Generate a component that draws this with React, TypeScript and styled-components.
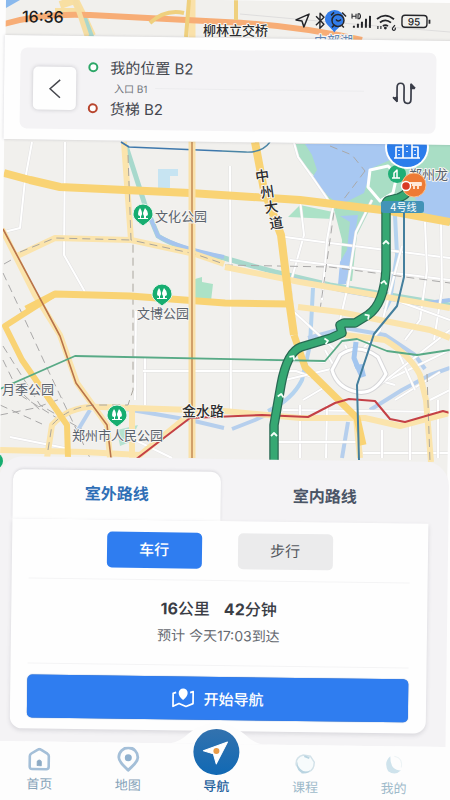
import React, { useState } from "react";
import styled, { createGlobalStyle } from "styled-components";

const fontStack = `Inter, "Noto Sans CJK SC", "Noto Sans", sans-serif`;

const GlobalStyle = createGlobalStyle`
  * { box-sizing: border-box; }
  html, body { margin: 0; background: #fdfdfd; }
  body { font-family: ${fontStack}; color: #333a45; overflow-x: hidden; }
  button { font-family: inherit; cursor: pointer; }
`;

const Screen = styled.main`
  position: relative;
  min-height: 100vh;
  display: flex;
  overflow: hidden;
`;

const MapLayer = styled.div`
  position: absolute;
  inset: 0;
  svg { display: block; width: 100%; height: 490px; }
`;

const Tilted = styled.div`
  position: relative;
  flex: 1;
  display: flex;
  flex-direction: column;
  transform: rotate(0.75deg);
`;

const StatusBar = styled.div`
  height: 38px;
  padding: 0 23px 0 17px;
  display: flex;
  align-items: center;
  justify-content: space-between;
  color: #1c1c1e;
`;

const Clock = styled.time`
  font-size: 16px;
  line-height: 20px;
  font-weight: 500;
`;

const StatusIcons = styled.div`
  display: flex;
  svg { display: block; }
`;

const Header = styled.header`
  background: #fefefe;
  padding: 12px 18px 11px 16px;
  box-shadow: 0 0 3px rgba(60, 60, 80, 0.22);
`;

const RouteCard = styled.section`
  height: 81px;
  display: flex;
  align-items: center;
  gap: 12px;
  padding: 0 20px 0 13px;
  border-radius: 7px;
  background: #f4f3f5;
`;

const BackButton = styled.button`
  width: 43px;
  height: 43px;
  padding: 0;
  display: grid;
  place-items: center;
  border: 0;
  border-radius: 5px;
  background: #fefefe;
  box-shadow: 0 0 4px rgba(40, 40, 60, 0.22);
`;

const Stops = styled.div`
  flex: 1;
  display: flex;
  flex-direction: column;
  padding-bottom: 3px;
`;

const Stop = styled.div`
  display: flex;
  align-items: center;
  gap: 12px;
  height: 22px;
  font-size: 15px;
  color: #44474f;
`;

const Ring = styled.span<{ $color: string }>`
  width: 10px;
  height: 10px;
  border: 2px solid ${(p) => p.$color};
  border-radius: 50%;
  background: #fff;
`;

const Via = styled.div`
  display: flex;
  align-items: center;
  gap: 8px;
  height: 19px;
  padding-left: 26px;
  padding-right: 16px;
  font-size: 10px;
  color: #70737b;
  &::after {
    content: "";
    flex: 1;
    height: 1px;
    background: #ececee;
  }
`;

const SwapButton = styled.button`
  padding: 0;
  border: 0;
  background: none;
  display: grid;
`;

const MapWindow = styled.div`
  flex: 1;
  min-height: 160px;
`;

const Sheet = styled.section`
  background: #f4f3f5;
  border-radius: 24px 24px 0 0;
  padding: 13px 20px 13px 14px;
`;

const Tabs = styled.div`
  display: flex;
`;

const Tab = styled.button<{ $active: boolean }>`
  flex: 1;
  height: 49px;
  padding: 0 0 6px;
  border: 0;
  border-radius: 10px 10px 0 0;
  background: ${(p) => (p.$active ? "#fefefe" : "transparent")};
  color: ${(p) => (p.$active ? "#2f6fb6" : "#4b5566")};
  box-shadow: ${(p) => (p.$active ? "0 -1px 3px rgba(60, 60, 80, 0.14)" : "none")};
  font-size: 16px;
  font-weight: 700;
`;

const RoutePanel = styled.div`
  position: relative;
  display: flex;
  flex-direction: column;
  padding: 12px 18px 11px 17px;
  border-radius: 0 0 12px 12px;
  background: #fefefe;
  box-shadow: 0 2px 4px rgba(60, 60, 80, 0.15);
`;

const Modes = styled.div`
  display: flex;
  justify-content: center;
  gap: 36px;
  padding-bottom: 11px;
`;

const Mode = styled.button<{ $active: boolean }>`
  width: 95px;
  height: 36px;
  padding: 0 0 3px;
  border: 0;
  border-radius: 5px;
  font-size: 15px;
  font-weight: ${(p) => (p.$active ? 500 : 400)};
  background: ${(p) => (p.$active ? "#2f7df0" : "#ebebec")};
  color: ${(p) => (p.$active ? "#fff" : "#55585e")};
`;

const Summary = styled.div`
  height: 86px;
  display: flex;
  flex-direction: column;
  align-items: center;
  padding-top: 15px;
  border-top: 1px solid #f4f4f5;
  border-bottom: 1px solid #f4f4f5;
`;

const Totals = styled.div`
  display: flex;
  gap: 14px;
  font-size: 16px;
  line-height: 26px;
  font-weight: 500;
  color: #3a3d45;
  b { font-weight: 700; }
`;

const Arrival = styled.div`
  font-size: 14px;
  line-height: 28px;
  color: #666a71;
`;

const StartButton = styled.button`
  height: 43px;
  margin-top: 11px;
  padding: 0;
  display: flex;
  align-items: center;
  justify-content: center;
  gap: 8px;
  border: 0;
  border-radius: 5px;
  background: #2f7df0;
  box-shadow: 0 0 1px #2459a8;
  color: #fff;
  font-size: 15px;
  font-weight: 500;
`;

const Nav = styled.nav`
  position: relative;
  height: 56px;
  display: flex;
  padding-right: 7px;
  background: #fdfdfd;
  box-shadow: 0 10px 0 #fdfdfd;
`;

const Bump = styled.svg`
  position: absolute;
  left: 50%;
  bottom: 100%;
  width: 92px;
  height: 22px;
  margin-left: -50px;
`;

const NavItem = styled.a<{ $tone: "idle" | "active" | "faded" }>`
  position: relative;
  flex: 1;
  display: flex;
  flex-direction: column;
  align-items: center;
  justify-content: flex-end;
  gap: ${(p) => (p.$tone === "active" ? 2 : 4)}px;
  padding-bottom: 6px;
  font-size: 13px;
  line-height: 16px;
  text-decoration: none;
  color: ${(p) =>
    p.$tone === "active" ? "#1e5f9c" : p.$tone === "idle" ? "#86a3b9" : "#9dbaca"};
  font-weight: ${(p) => (p.$tone === "active" ? 500 : 400)};
  svg { display: block; flex: none; }
`;

const Casing = ({ d, w, fill, edge }: { d: string; w: number; fill: string; edge: string }) => (
  <>
    <path d={d} stroke={edge} strokeWidth={w + 1} />
    <path d={d} stroke={fill} strokeWidth={w} />
  </>
);

const minorRoads = [
  "M32 142 L25 180 L20 228 L4 232", "M65 142 L64 255 L85 292", "M145 358 V405",
  "M136 311 L135 400", "M143 371 H296 L320 380", "M230 166 L231 410",
  "M294 143 L298 157 L313 178 L333 207", "M300 200 L304 235 L290 285 L295 330",
  "M285 237 L330 243 L450 258", "M333 207 L327 240 L322 300", "M290 260 L450 280",
  "M372 200 L356 232 L347 290 L340 320", "M425 222 L427 270 L420 320 L405 340",
  "M441 222 L442 290 L434 340", "M402 246 L380 330 L360 352", "M395 300 L450 320",
  "M294 312 L318 334 L335 350", "M283 410 L450 412", "M327 405 L326 458", "M300 405 V458",
  "M270 442 H360", "M363 453 H450", "M382 430 V458", "M410 420 V460", "M438 400 V458",
  "M377 385 L450 350", "M395 400 L440 372", "M395 345 L415 390", "M345 345 L360 375 L395 385",
  "M285 380 L335 368 L325 350", "M377 387 L450 330", "M430 400 L450 390", "M303 400 L325 387",
  "M284 240 L290 300", "M270 360 L325 362", "M10 437 L65 448", "M135 440 L172 458",
];

const TreePin = ({ x, y }: { x: number; y: number }) => (
  <g transform={`translate(${x} ${y})`}>
    <path d="M-10 0a10 10 0 1 1 20 0c0 5-5 8-10 12c-5-4-10-7-10-12Z" fill="#16ad70" stroke="#e8f4ec" strokeWidth="1" />
    <path d="M-3 -6 C-1 -3 -1 -1 -1 0 Q-1 1 -2 2 V4 H1 V2 Q0 1 0 -1 Q1 -4 2 -6 Q5 -3 5 0 Q5 2 3 2 V4 H5 V5 H-5 V4 H-3 V2 Q-5 2 -5 0 Q-5 -3 -3 -6Z" fill="#fff" />
  </g>
);

const Chevron = ({ x, y, a }: { x: number; y: number; a: number }) => (
  <path d="M-3 2 L0 -1 L3 2" transform={`translate(${x} ${y}) rotate(${a})`} stroke="#f4fff8" strokeWidth="1.8" />
);

const routePath = "M274 462 V425 L281 385 Q287 352 301 347 L331 338 L342 333 L340 325 L344 323 H355 L368 315 Q384 304 386 270 L386 207 Q385 201 390 200 L398 198 Q405 196 409 190";

const MapDrawing = () => (
  <svg viewBox="0 0 450 490" preserveAspectRatio="xMidYMin slice" fill="none" strokeLinejoin="round" fontFamily={fontStack} role="img" aria-label="地图">
    <path d="M0 0H450V490H0Z" fill="#f1f0ed" />
    <path d="M293 144 L300 160 L316 178 L332 204 L335 213 L342 240 L340 280 L352 281 L357 235 L372 205 L450 225 V144Z" fill="#a9dec5" />
    <path d="M305 144 L312 155 L317 170 L312 178 L328 196 L340 205 L364 193 L372 168 L390 160 L398 144Z M405 178 L415 168 L432 178 L450 172 V220 L424 213 L415 198Z M340 216 L350 222 L347 250 L340 262 L338 285 L346 284 L355 235 L358 215Z" fill="#a8c8f2" />
    <path d="M288 217 L300 205 L333 212 L333 219Z M195 279 L202 277 V282 L213 284 L211 301 L195 298Z" fill="#ace2c7" />
    <path d="M158 169 H178 V176 H170 V188 H158Z" fill="#c7e4f2" />
    <path d="M0 0H20L6 8Z" fill="#8ab9ed" />
    <path d="M117 430 L138 425 L130 442 L120 446Z" fill="#b5e2cf" />

    <path d="M126 146 L145 205 L158 236 Q178 249 224 258 L275 272 L330 285 L450 305" stroke="#a8d9cd" strokeWidth="5" />
    <path d="M145 205 L158 236 Q178 248 224 257 M285 277 L345 291 L420 304 L450 300" stroke="#a5c4ee" strokeWidth="4" />
    <path d="M395 215 L397 255 L390 300 L385 310 M313 288 L310 345 L302 380 Q292 400 268 411" stroke="#b4d3ef" strokeWidth="4" />
    <path d="M308 338 L345 328 L385 335 L415 355 L425 369 M370 410 L402 390 L430 375 L450 368 M232 429 L255 420 L268 414 M348 422 L342 458 M120 408 L190 420 L224 428 M78 430 L90 410" stroke="#b6cfed" strokeWidth="4" />

    {minorRoads.map((d) => <Casing key={d} d={d} w={2} fill="#fff" edge="#e2e1e2" />)}
    <path d="M370 170 L388 166 L397 175 L393 193 L380 201 L368 187Z" fill="#a9dec5" stroke="#fff" strokeWidth="3" />
    <path d="M340 355 Q358 342 378 357 L386 374 Q374 395 357 392 Q337 388 332 370Z" fill="#f1f0ed" stroke="#d6d6d8" strokeWidth="5" />
    <path d="M340 355 Q358 342 378 357 L386 374 Q374 395 357 392 Q337 388 332 370Z" stroke="#fff" strokeWidth="3" />
    <path d="M356 342 L354 358 L358 368" stroke="#a3c6ef" strokeWidth="5" />
    <path d="M354 365 L363 364 L366 376 L360 378Z" fill="#a3c6ef" />

    <g stroke="#aaa9a9" strokeWidth="1" strokeDasharray="8 5">
      <path d="M365 171 L334 212 L320 310 M330 146 L352 155 L365 171 M225 265 L330 267 L450 283 M4 264 L20 255" />
      <path d="M3 273 L25 320 L48 370 L90 458 M3 346 L40 405 L83 430 M3 360 L20 395 L60 420 M0 415 L35 408 L63 398 M0 405 L42 424 M24 395 L40 410" />
    </g>

    <g strokeWidth="6" stroke="#fbe4ac">
      <path d="M124 142 L131 240 L195 254 L224 264" />
      <path d="M15 257 L55 238 L131 240" />
      <path d="M2 229 L35 295 L60 335 L77 383 L107 425 L110 458" />
      <path d="M47 458 L52 425 Q70 405 100 407 L224 411 L300 418 L365 418 L400 426 L450 413" />
      <path d="M132 405 V458 M0 450 L85 452 L140 455 L190 414" />
      <path d="M225 267 L300 282 L450 308 M298 307 L340 312 L430 330 L450 338" />
      <path d="M345 335 L385 340 Q410 355 420 375 L426 400 L431 462 M356 418 L360 458" />
    </g>
    <path d="M128 155 L131 240 L195 254 L224 264 M20 252 L55 238 L131 240 M48 450 L52 425 Q70 405 100 405 H128 L133 390 V242 M427 374 L430 462" stroke="#aaa69e" strokeWidth="1" strokeDasharray="8 5" />
    <g stroke="#f9d374">
      <path d="M4 173 L30 180 L60 187 L190 193 L300 200 L390 211 L450 222" strokeWidth="8" />
      <path d="M26 309 L55 294 L130 296 L225 303 L290 304" strokeWidth="7" />
      <path d="M255 142 L264 190 L281 235 L289 300 L294 335" strokeWidth="8" />
      <path d="M294 335 L305 367 L357 418 L363 445" strokeWidth="7" />
      <path d="M55 294 L5 326 L22 360 L67 425 L68 458" strokeWidth="6" />
    </g>
    <path d="M270 142 Q262 153 245 152 L222 151" stroke="#4a85a5" strokeWidth="1.4" />
    <path d="M121 142 L129 147 L222 151" stroke="#3e78ac" strokeWidth="1.6" />
    <path d="M192 0 V458" stroke="#fae1a9" strokeWidth="7" />
    <path d="M192 142 V458" stroke="#c7905b" strokeWidth="1.6" />
    <path d="M3 229 L60 336 L76 383 L107 425 L111 458" stroke="#b8734a" strokeWidth="1.6" />
    <path d="M0 389 L75 356 L325 361 L342 341 L357 339 L387 351 L417 355 L450 350" stroke="#58aa86" strokeWidth="1.8" />
    <path d="M135 460 L190 418 L262 415 L308 417 L335 403 L349 399 L375 401 L390 419 L405 422 L443 411 L450 413" stroke="#c44046" strokeWidth="2" />
    <path d="M404 211 V277 L397 306 L374 334 L357 385 L359 460" stroke="#447f9d" strokeWidth="2" />
    <path d={routePath} stroke="#286953" strokeWidth="9.5" />
    <path d={routePath} stroke="#36a873" strokeWidth="7" />
    <Chevron x={274} y={434} a={0} /><Chevron x={281} y={395} a={10} />
    <Chevron x={293} y={357} a={35} /><Chevron x={327} y={341} a={78} />
    <Chevron x={368} y={316} a={55} /><Chevron x={384} y={282} a={10} />
    <Chevron x={386} y={242} a={0} /><Chevron x={386} y={204} a={5} />

    <g>
      <path d="M60 5 L75 0 L82 14 L92 36 M55 12 L82 12" stroke="#f8dfa2" strokeWidth="8" />
      <path d="M83 14 L92 38" stroke="#a9d7cd" strokeWidth="5" />
      <path d="M4 24 Q40 13 90 15 L225 22 Q295 25 362 40" stroke="#f7ad76" strokeWidth="6" />
      <path d="M75 0 L87 36" stroke="#f5dda3" strokeWidth="5" />
      <path d="M150 23 Q165 9 184 13 M189 0 L186 37 M236 0 V20" stroke="#efd07e" strokeWidth="4" />
      <path d="M240 14 Q350 24 450 32" stroke="#dedddd" />
    </g>

    <g fill="#5a626b" stroke="#f6f5f3" strokeWidth="2" paintOrder="stroke" fontSize="13">
      <text x="155" y="221">文化公园</text>
      <text x="137" y="318">文博公园</text>
      <text x="2" y="394">月季公园</text>
      <text x="72" y="440">郑州市人民公园</text>
      <text x="409" y="179">郑州龙</text>
      <text x="314" y="45" fill="#6388b5">中部湖</text>
    </g>
    <g fill="#2c2d30" stroke="#f9f7f2" strokeWidth="2" paintOrder="stroke" fontWeight="500">
      <text x="203" y="35" fontSize="13">柳林立交桥</text>
      <text x="182" y="416" fontSize="14">金水路</text>
      <g fontSize="14">
        <text transform="translate(256 182) rotate(-8)">中</text><text transform="translate(261 198) rotate(-8)">州</text>
        <text transform="translate(265 213) rotate(-8)">大</text><text transform="translate(270 229) rotate(-8)">道</text>
      </g>
    </g>
    <TreePin x={143} y={214} /><TreePin x={162} y={294} /><TreePin x={117} y={415} />
    <circle cx="-5" cy="461" r="8" fill="#16ad70" />
    <circle cx="397" cy="174" r="9" fill="#20ae76" />
    <path d="M392 178h8M394 178v-5l3-3v8" stroke="#fff" strokeWidth="1.5" />
    <rect x="381" y="201" width="43" height="12" rx="3" fill="#4293b7" />
    <text x="390" y="211" fontSize="10" fill="#fff">4号线</text>
    <circle cx="407" cy="147" r="22" fill="#fff" />
    <circle cx="407" cy="147" r="20" fill="#2b7deb" />
    <path d="M396 158V147h7v-5h9v5h6v11M394 158h26M403 147v11M412 147v11M399 150v1M399 154v1M407 146v1M407 151v1M415 150v1M415 154v1" stroke="#fff" strokeWidth="1.6" />
    <circle cx="414" cy="185" r="12" fill="#ee7b35" stroke="#f8c08d" strokeWidth="1" />
    <path d="M409 183h12v2h-9M414 186v3M418 186v3" stroke="#ffe9d6" strokeWidth="1.8" />
    <circle cx="406" cy="186" r="4.5" fill="#d93a23" stroke="#fff" strokeWidth="1.5" />
    <path d="M0 0H6L0 460Z M220 0H450V3Z M450 340V490H447Z" fill="#fdfdfd" />
  </svg>
);

const StatusGlyphs = () => (
  <svg width="138" height="26" viewBox="0 0 138 26" fill="none" stroke="#25262a" strokeWidth="1.5" strokeLinejoin="round">
    <path d="M2 13 L15 7 L10 20 L8 14Z" />
    <path d="M31 12a9.5 9.5 0 0 1 19 0c0 5-6 8-9.500 13-3.500-5-9.500-8-9.500-13Z" fill="#327ce9" stroke="none" />
    <path d="M22 9l8 8-4 4V6l4 4-8 8" strokeWidth="1.4" />
    <circle cx="44" cy="13" r="6" /><path d="M42 12q2 3 5 0M37 8l3-3M48 5l4 4M40 18l-2 2M48 18l2 2" />
    <g strokeWidth="2"><path d="M60 20v-2M64 20v-4M68 20v-6M72 20V11M76 20V8" /></g>
    <path d="M58 6v5M62 6v5M58 8.5h4M64 6v5h1.500q2-2.500 0-5Z" strokeWidth="1.1" />
    <path d="M83 11q8-7 17 0M86 14.5q5.500-4.500 11 0M89 18q2.500-2 5 0" strokeWidth="1.8" />
    <path d="M84 18v3M87 18v3M101 17l-2 2.500a1.500 1.500 0 1 0 2 0" strokeWidth="1.2" />
    <circle cx="91.5" cy="20" r="1.4" fill="#25262a" stroke="none" />
    <rect x="108" y="7" width="25" height="12" rx="3" strokeWidth="1.4" />
    <path d="M135.5 11v4" strokeWidth="1.8" />
    <text x="120" y="17" textAnchor="middle" fontSize="10" fontWeight="500" fill="#25262a" stroke="none" fontFamily={fontStack}>95</text>
  </svg>
);

const HomeIcon = () => (
  <svg width="24" height="24" viewBox="0 0 24 24" fill="none" stroke="#a4bfd8" strokeWidth="2.6" strokeLinejoin="round">
    <path d="M2.5 8.5 Q2.5 7 4 6 L10.5 2 Q12 1 13.5 2 L20 6 Q21.5 7 21.5 8.5 V19 Q21.5 21.5 19 21.5 H5 Q2.5 21.5 2.5 19Z" />
    <path d="M10 18v-4q2-3 4 0v4Z" fill="#8daac4" stroke="#8daac4" strokeWidth="1" />
  </svg>
);

const PlaceIcon = () => (
  <svg width="24" height="26" viewBox="0 0 24 26" fill="none" stroke="#a4bfd8" strokeWidth="2.8" strokeLinejoin="round">
    <path d="M12 23.5 C8 19 2.5 16 2.5 10.5 a9.5 9.5 0 0 1 19 0 C21.5 16 16 19 12 23.5Z" />
    <circle cx="12" cy="11" r="3.5" fill="#8fb0ce" stroke="none" />
  </svg>
);

const CompassIcon = () => (
  <svg width="48" height="48" viewBox="0 0 48 48">
    <defs>
      <linearGradient id="dial" x1="0" y1="0" x2="0" y2="1">
        <stop offset="0" stopColor="#3372ae" /><stop offset="1" stopColor="#1169b4" />
      </linearGradient>
    </defs>
    <circle cx="24" cy="24" r="23" fill="url(#dial)" />
    <path d="M11 23 L35 14 L24 36 L21 26Z" fill="#fff" stroke="#fff" strokeLinejoin="round" />
    <circle cx="24" cy="23" r="3" fill="#eb9c48" />
  </svg>
);

const FadedRing = () => (
  <svg width="22" height="22" viewBox="0 0 22 22" fill="none">
    <path d="M2 12 Q1 4 9 2 L16 3 L20 9 Q20 17 14 19 L8 20Z" stroke="#d3e2e9" strokeWidth="1.5" fill="#f7fbfc" />
    <path d="M3 8 Q3 15 9 18 Q13 19 16 17 Q14 21 8 20 Q1 17 3 8Z" fill="#b9d4e1" />
    <path d="M10 3 L15 5" stroke="#b9d4e1" strokeWidth="2" />
  </svg>
);

const FadedMoon = () => (
  <svg width="22" height="22" viewBox="0 0 22 22">
    <path d="M7 2 Q0 8 5 17 Q12 22 18 16 Q7 17 7 2Z" fill="#cfe3ec" />
    <path d="M11 2 Q20 4 18 13" fill="none" stroke="#edf3f5" />
  </svg>
);

const SwapIcon = () => (
  <svg width="24" height="24" viewBox="0 0 24 24" fill="none" stroke="#3a3d49" strokeWidth="1.7" strokeLinejoin="round">
    <path d="M1 16 L5 20 V6 Q5 2 8.500 2 Q12 2 12 6 V18 Q12 22 15.500 22 Q19 22 19 18 V3 L23 7" />
    <path d="M2 17 L5 20 V16Z M19 3 V7 H22Z" fill="#3a3d49" />
  </svg>
);

const StartIcon = () => (
  <svg width="24" height="22" viewBox="0 0 24 22" fill="none" stroke="#fff" strokeWidth="1.7" strokeLinejoin="round">
    <path d="M5 5 L2 6 V19 L8 16 L15 19 L22 16 V4 L19 5" />
    <path d="M12 12.5 C9 10 7.5 8 7.5 5.5 a4.5 4.5 0 0 1 9 0 C16.5 8 15 10 12 12.5Z" fill="#fff" stroke="none" />
  </svg>
);

export default function App() {
  const [place, setPlace] = useState<"outdoor" | "indoor">("outdoor");
  const [mode, setMode] = useState<"drive" | "walk">("drive");
  return (
    <>
      <GlobalStyle />
      <Screen>
        <MapLayer><MapDrawing /></MapLayer>
        <Tilted>
          <StatusBar>
            <Clock>16:36</Clock>
            <StatusIcons><StatusGlyphs /></StatusIcons>
          </StatusBar>
          <Header>
            <RouteCard>
              <BackButton aria-label="返回">
                <svg width="14" height="22" viewBox="0 0 14 22" fill="none" stroke="#45474d" strokeWidth="1.5">
                  <path d="M12 2 L2 11 L12 20" />
                </svg>
              </BackButton>
              <Stops>
                <Stop><Ring $color="#2da768" />我的位置 B2</Stop>
                <Via>入口 B1</Via>
                <Stop><Ring $color="#b8452e" />货梯 B2</Stop>
              </Stops>
              <SwapButton aria-label="交换起终点"><SwapIcon /></SwapButton>
            </RouteCard>
          </Header>
          <MapWindow />
          <Sheet>
            <Tabs role="tablist">
              <Tab role="tab" aria-selected={place === "outdoor"} $active={place === "outdoor"} onClick={() => setPlace("outdoor")}>室外路线</Tab>
              <Tab role="tab" aria-selected={place === "indoor"} $active={place === "indoor"} onClick={() => setPlace("indoor")}>室内路线</Tab>
            </Tabs>
            <RoutePanel>
              <Modes>
                <Mode aria-pressed={mode === "drive"} $active={mode === "drive"} onClick={() => setMode("drive")}>车行</Mode>
                <Mode aria-pressed={mode === "walk"} $active={mode === "walk"} onClick={() => setMode("walk")}>步行</Mode>
              </Modes>
              <Summary>
                <Totals><span><b>16</b>公里</span><span><b>42</b>分钟</span></Totals>
                <Arrival>预计 今天17:03到达</Arrival>
              </Summary>
              <StartButton><StartIcon />开始导航</StartButton>
            </RoutePanel>
          </Sheet>
          <Nav>
            <Bump viewBox="0 0 92 22" aria-hidden="true">
              <path d="M0 22 Q10 20 18 12 Q30 1 46 1 Q62 1 74 12 Q82 20 92 22Z" fill="#fdfdfd" />
            </Bump>
            <NavItem href="#home" $tone="idle"><HomeIcon />首页</NavItem>
            <NavItem href="#map" $tone="idle"><PlaceIcon />地图</NavItem>
            <NavItem href="#navigate" $tone="active" aria-current="page"><CompassIcon />导航</NavItem>
            <NavItem href="#course" $tone="faded"><FadedRing />课程</NavItem>
            <NavItem href="#mine" $tone="faded"><FadedMoon />我的</NavItem>
          </Nav>
        </Tilted>
      </Screen>
    </>
  );
}
